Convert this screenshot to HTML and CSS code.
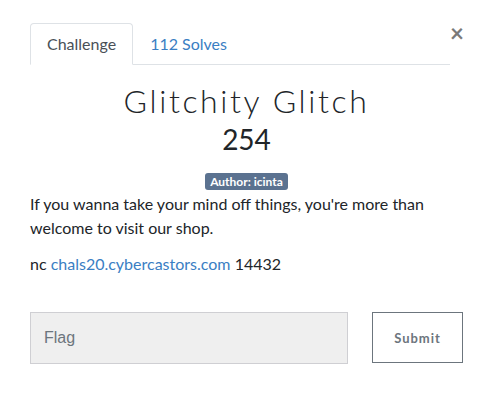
FILE: index.html
```html
<!DOCTYPE html>
<html>
<head>
<meta charset="utf-8">
<link rel="stylesheet" href="styles.css">
</head>
<body>
<div class="modal">
  <div class="header">
    <ul class="tabs">
      <li class="tab active">Challenge</li>
      <li class="tab link">112 Solves</li>
    </ul>
    <span class="close">&times;</span>
  </div>
  <h2 class="title">Glitchity Glitch</h2>
  <div class="points">254</div>
  <div class="badge-row"><span class="badge">Author: icinta</span></div>
  <p class="desc">If you wanna take your mind off things, you're more than welcome to visit our shop.</p>
  <p class="desc">nc <a class="lnk">chals20.cybercastors.com</a> 14432</p>
  <div class="form">
    <div class="input">Flag</div>
    <div class="btn">Submit</div>
  </div>
</div>
</body>
</html>
```
FILE: styles.css
```css
html, body { margin: 0; padding: 0; background: #fff; }
body { font-family: Lato, "Open Sans", sans-serif; color: #212529; }
.modal { width: 433px; padding: 23px 32px 0 30px; }
.header { display: flex; align-items: flex-start; }
.tabs { list-style: none; margin: 0; padding: 0; display: flex; flex: 1; border-bottom: 1px solid #dee2e6; }
.tab { font-size: 16px; padding: 0 16px; height: 40px; line-height: 40px; margin-bottom: -1px; border: 1px solid transparent; border-top-left-radius: 4px; border-top-right-radius: 4px; }
.tab.active { color: #495057; border-color: #dee2e6 #dee2e6 #fff; background: #fff; }
.tab.link { color: #3a7ec3; }
.close { width: 13px; text-align: right; font-size: 24px; font-weight: 700; color: #7a7a7a; line-height: 20px; margin-top: 0; }
.title { margin: 16px 0 0; text-align: center; font-weight: 300; font-size: 32px; letter-spacing: 2.6px; line-height: 40px; color: #212529; }
.points { text-align: center; font-size: 28px; line-height: 34px; margin-top: 1px; }
.badge-row { text-align: center; margin-top: 15px; line-height: 17px; }
.badge { display: inline-block; background: #5b7290; color: #fff; font-size: 12px; font-weight: 700; padding: 0 5px; border-radius: 3px; line-height: 17px; }
.desc { margin: 0 0 12px; font-size: 16px; line-height: 24px; }
.desc:first-of-type { margin-top: 2px; }
.lnk { color: #3a7ec3; text-decoration: none; }
.form { display: flex; gap: 24px; margin-top: 36px; }
.input { flex: 0 0 318px; box-sizing: border-box; height: 52px; background: #efefef; border: 1px solid #cfcfd3; font-family: "Liberation Sans", Arial, sans-serif; font-size: 16px; color: #6c757d; padding-left: 13px; display: flex; align-items: center; }
.btn { flex: 0 0 91px; box-sizing: border-box; height: 51px; border: 1px solid #6c757d; display: flex; align-items: center; justify-content: center; font-size: 13px; font-weight: 700; color: #6c757d; letter-spacing: 1px; }
```
